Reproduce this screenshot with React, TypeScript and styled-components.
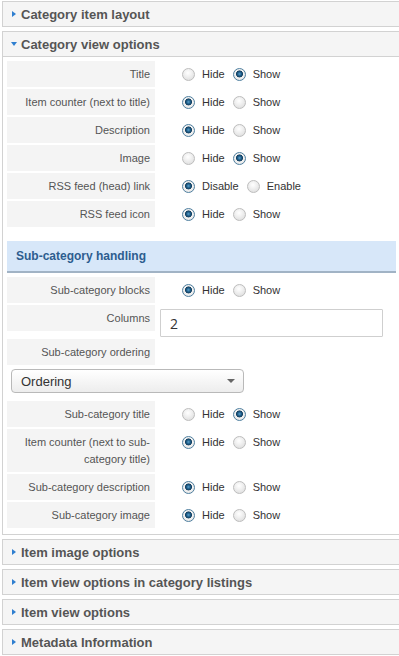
import React from 'react';
import styled, { createGlobalStyle, css } from 'styled-components';

const GlobalStyle = createGlobalStyle`
  html, body {
    margin: 0;
    padding: 0;
    background: #fff;
    overflow: hidden;
  }
  body {
    font-family: 'Liberation Sans', Arial, sans-serif;
  }
`;

const Page = styled.div`
  padding: 1px 0 0 2px;
  width: 420px;
`;

const Panel = styled.div`
  width: 399px;
  box-sizing: border-box;
  border: 1px solid #d2d2d2;
  margin-bottom: 4px;
  background: #fff;
`;

const PanelHeader = styled.div<{ $open?: boolean }>`
  display: flex;
  align-items: center;
  height: 24px;
  padding-left: 7px;
  background: #f5f5f5;
  color: #555;
  font-size: 13px;
  font-weight: 700;
  ${({ $open }) =>
    $open &&
    css`
      border-bottom: 1px solid #d2d2d2;
    `}
`;

const Caret = styled.span<{ $open?: boolean }>`
  display: inline-flex;
  justify-content: center;
  width: 7px;
  margin-right: 4px;
  &::before {
    content: '';
    display: block;
    width: 0;
    height: 0;
    ${({ $open }) =>
      $open
        ? css`
            border-left: 3.5px solid transparent;
            border-right: 3.5px solid transparent;
            border-top: 4px solid #2f7fd0;
          `
        : css`
            border-top: 3.5px solid transparent;
            border-bottom: 3.5px solid transparent;
            border-left: 4px solid #2f7fd0;
          `}
  }
`;

const PanelBody = styled.div`
  padding: 4px 4px 4px;
`;

const Row = styled.div`
  display: flex;
  align-items: flex-start;
  margin-bottom: 2px;
`;

const Label = styled.div`
  flex: none;
  width: 148px;
  box-sizing: border-box;
  padding: 5px 5px 4px;
  line-height: 17px;
  background: #f4f4f4;
  color: #555;
  font-size: 11px;
  text-align: right;
`;

const Control = styled.div`
  padding-left: 5px;
  flex: 1;
  min-width: 0;
`;

const RadioGroup = styled.div`
  display: flex;
  align-items: center;
  height: 26px;
  margin-left: 22px;
  font-size: 11px;
  color: #333;
`;

const RadioOption = styled.label`
  display: inline-flex;
  align-items: center;
  margin-right: 8px;
`;

const Radio = styled.span<{ $checked?: boolean }>`
  display: inline-block;
  width: 13px;
  height: 13px;
  box-sizing: border-box;
  border-radius: 50%;
  margin-right: 7px;
  ${({ $checked }) =>
    $checked
      ? css`
          border: 1px solid #4f7f9f;
          background: radial-gradient(
            circle at 50% 45%,
            #5aa0cc 0,
            #1d5b86 2px,
            #163f5e 3.2px,
            #f4f4f4 3.8px,
            #d9d9d9 100%
          );
        `
      : css`
          border: 1px solid #bdbdbd;
          background: radial-gradient(circle at 45% 35%, #fff 0, #f2f2f2 35%, #d8d8d8 100%);
        `}
`;

const SubHeading = styled.div`
  margin: 14px 0 4px;
  height: 30px;
  line-height: 30px;
  padding-left: 9px;
  background: #d7e7f9;
  border-bottom: 2px solid #a1b3c5;
  color: #2d5d8f;
  font-size: 12px;
  font-weight: 700;
`;

const TextInput = styled.input`
  display: block;
  width: 223px;
  height: 28px;
  margin-top: 4px;
  box-sizing: border-box;
  border: 1px solid #cfcfcf;
  border-radius: 1px;
  padding: 0 9px;
  font-family: 'Open Sans', 'Liberation Sans', sans-serif;
  font-size: 14px;
  color: #333;
  outline: none;
`;

const SelectBox = styled.div`
  display: flex;
  align-items: center;
  justify-content: space-between;
  width: 233px;
  height: 24px;
  box-sizing: border-box;
  margin: 4px 0 8px 4px;
  padding: 0 8px 0 9px;
  border: 1px solid #b9b9b9;
  border-radius: 4px;
  background: linear-gradient(#ffffff, #ededed);
  color: #333;
  font-size: 13px;
  &::after {
    content: '';
    border-left: 4px solid transparent;
    border-right: 4px solid transparent;
    border-top: 4px solid #666;
  }
`;

type Choice = { label: string; checked?: boolean };

const RadioField = ({ label, choices }: { label: React.ReactNode; choices: Choice[] }) => (
  <Row>
    <Label>{label}</Label>
    <Control>
      <RadioGroup>
        {choices.map((c) => (
          <RadioOption key={c.label}>
            <Radio $checked={c.checked} />
            {c.label}
          </RadioOption>
        ))}
      </RadioGroup>
    </Control>
  </Row>
);

const hide = (shown: boolean): Choice[] => [
  { label: 'Hide', checked: !shown },
  { label: 'Show', checked: shown },
];

const CollapsedPanel = ({ title }: { title: string }) => (
  <Panel>
    <PanelHeader>
      <Caret />
      {title}
    </PanelHeader>
  </Panel>
);

export default function App() {
  return (
    <>
      <GlobalStyle />
      <Page>
        <CollapsedPanel title='Category item layout' />
        <Panel>
          <PanelHeader $open>
            <Caret $open />
            Category view options
          </PanelHeader>
          <PanelBody>
            <RadioField label='Title' choices={hide(true)} />
            <RadioField label='Item counter (next to title)' choices={hide(false)} />
            <RadioField label='Description' choices={hide(false)} />
            <RadioField label='Image' choices={hide(true)} />
            <RadioField
              label='RSS feed (head) link'
              choices={[
                { label: 'Disable', checked: true },
                { label: 'Enable' },
              ]}
            />
            <RadioField label='RSS feed icon' choices={hide(false)} />

            <SubHeading>Sub-category handling</SubHeading>
            <RadioField label='Sub-category blocks' choices={hide(false)} />
            <Row>
              <Label>Columns</Label>
              <Control>
                <TextInput defaultValue='2' />
              </Control>
            </Row>
            <Row>
              <Label>Sub-category ordering</Label>
            </Row>
            <SelectBox>Ordering</SelectBox>
            <RadioField label='Sub-category title' choices={hide(true)} />
            <RadioField
              label={
                <>
                  Item counter (next to sub-
                  <br />
                  category title)
                </>
              }
              choices={hide(false)}
            />
            <RadioField label='Sub-category description' choices={hide(false)} />
            <RadioField label='Sub-category image' choices={hide(false)} />
          </PanelBody>
        </Panel>
        <CollapsedPanel title='Item image options' />
        <CollapsedPanel title='Item view options in category listings' />
        <CollapsedPanel title='Item view options' />
        <CollapsedPanel title='Metadata Information' />
      </Page>
    </>
  );
}
